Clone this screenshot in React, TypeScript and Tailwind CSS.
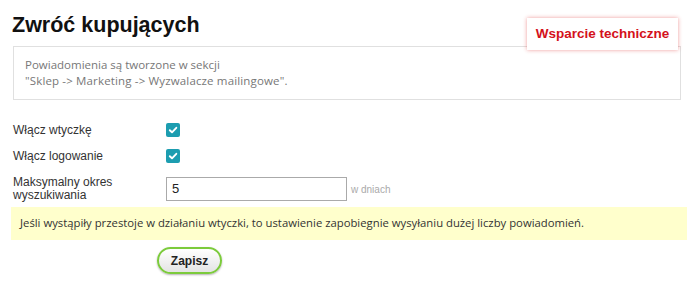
import React from "react";

function Check() {
  return (
    <span className="flex h-[14px] w-[14px] items-center justify-center rounded-[2px] bg-[#1c9db0]">
      <svg width="10" height="10" viewBox="0 0 10 10">
        <path d="M1.8 5.2 L4 7.3 L8.3 2.8" fill="none" stroke="#fff" strokeWidth="1.9" strokeLinecap="round" strokeLinejoin="round" />
      </svg>
    </span>
  );
}

export default function App() {
  return (
    <div className="relative h-[293px] w-[700px] overflow-hidden bg-white font-['Liberation_Sans',Arial,sans-serif]">
      <div className="absolute left-[527px] top-[18px] z-10 flex h-[32px] w-[151px] items-center justify-center bg-white text-[13.5px] font-bold text-[#d4111b] shadow-[0_0_4px_rgba(220,30,30,0.45)]">
        Wsparcie techniczne
      </div>
      <div className="pl-[12px] pt-[11px]">
        <h1 className="text-[21.5px] font-bold leading-[28px] text-[#111]">Zwróć kupujących</h1>
      </div>
      <div className="ml-[13px] mt-[7px] h-[54px] w-[668px] border border-[#e0e0e0] px-[11px] pt-[10px] font-['Open_Sans',sans-serif] text-[11.5px] leading-[16px] text-[#777]">
        <div>Powiadomienia są tworzone w sekcji</div>
        <div className="tracking-[0.15px]">"Sklep -&gt; Marketing -&gt; Wyzwalacze mailingowe".</div>
      </div>
      <div className="mt-[23px] flex flex-col pl-[13px] text-[12px] text-[#333]">
        <div className="flex h-[14px] items-center">
          <span className="w-[153px]">Włącz wtyczkę</span>
          <Check />
        </div>
        <div className="mt-[12px] flex h-[14px] items-center">
          <span className="w-[153px]">Włącz logowanie</span>
          <Check />
        </div>
        <div className="mt-[13px] flex items-center">
          <span className="w-[153px] leading-[13px]">Maksymalny okres<br />wyszukiwania</span>
          <div className="flex h-[24px] w-[181px] items-center border border-[#aaa] px-[5px] text-[13px] text-[#222]">5</div>
          <span className="ml-[4px] text-[10px] text-[#aaa]">w dniach</span>
        </div>
      </div>
      <div className="ml-[11px] mt-[5px] flex h-[33px] w-[676px] items-center bg-[#ffffcc] px-[9px] font-['Open_Sans',sans-serif] text-[11.3px] text-[#333]">
        Jeśli wystąpiły przestoje w działaniu wtyczki, to ustawienie zapobiegnie wysyłaniu dużej liczby powiadomień.
      </div>
      <div className="mt-[7px] pl-[157px]">
        <button className="flex h-[27px] w-[65px] items-center justify-center rounded-full border-[2px] border-[#7ccb3c] bg-gradient-to-b from-white to-[#e4e4e4] text-[12px] font-bold text-[#222] shadow-[0_1px_2px_rgba(0,0,0,0.3)]">
          Zapisz
        </button>
      </div>
    </div>
  );
}
